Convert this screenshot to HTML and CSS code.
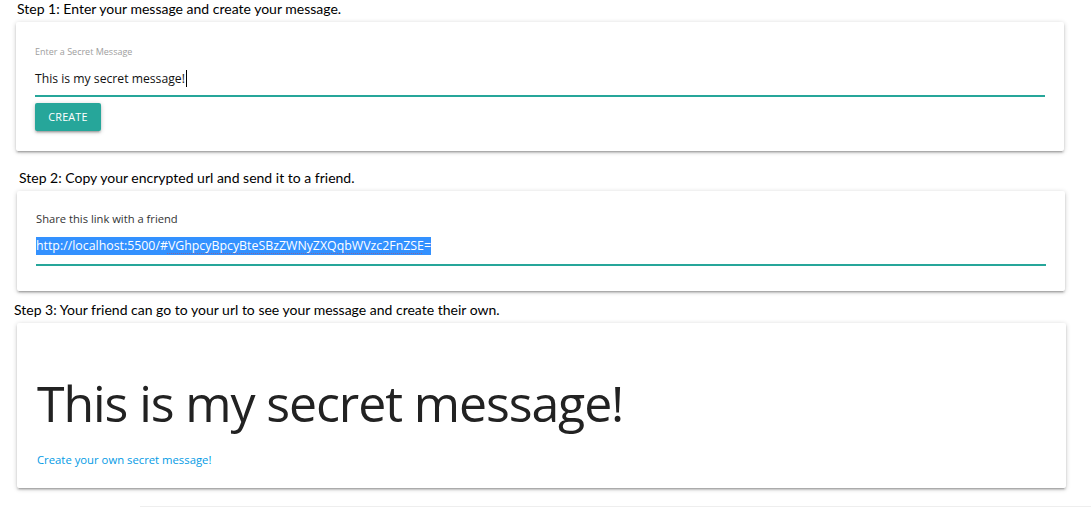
FILE: index.html
```html
<!DOCTYPE html>
<html>
<head>
<meta charset="utf-8">
<link rel="stylesheet" href="styles.css">
</head>
<body>
<section class="step step-one">
  <h2 class="step-title">Step 1: Enter your message and create your message.</h2>
  <div class="card card-one">
    <label class="field-label muted">Enter a Secret Message</label>
    <div class="field"><span class="field-text">This is my secret message!</span><span class="caret"></span></div>
    <button class="btn">CREATE</button>
  </div>
</section>
<section class="step step-two">
  <h2 class="step-title">Step 2: Copy your encrypted url and send it to a friend.</h2>
  <div class="card card-two">
    <label class="field-label dark">Share this link with a friend</label>
    <div class="field url-field"><span class="selected">http://localhost:5500/#<span class="misspelt">VGhpcyBpcyBteSBzZWNyZXQqbWVzc2FnZSE</span>=</span></div>
  </div>
</section>
<section class="step step-three">
  <h2 class="step-title">Step 3: Your friend can go to your url to see your message and create their own.</h2>
  <div class="card card-three">
    <h1 class="message">This is my secret message!</h1>
    <a class="own-link" href="#">Create your own secret message!</a>
  </div>
</section>
<div class="footer-rule"></div>
</body>
</html>
```
FILE: styles.css
```css
html, body {
  margin: 0;
  padding: 0;
  background: #fff;
}
body {
  width: 1091px;
  height: 512px;
  overflow: hidden;
  font-family: "Open Sans", "Noto Sans", sans-serif;
}
.step-title {
  margin: 0;
  font-family: Lato, "Liberation Sans", sans-serif;
  font-weight: 400;
  font-size: 14px;
  line-height: 18px;
  color: #000;
}
.step-one .step-title { padding-left: 17px; }
.step-two { margin-top: 18px; }
.step-two .step-title { padding-left: 19px; }
.step-three { margin-top: 10px; }
.step-three .step-title { padding-left: 14px; }

.card {
  background: #fff;
  border-radius: 2px;
  margin-top: 4px;
  box-shadow: 0 2px 2px 0 rgba(0,0,0,.14), 0 3px 1px -2px rgba(0,0,0,.12), 0 1px 5px 0 rgba(0,0,0,.2);
  box-sizing: border-box;
}
.card-one {
  margin-left: 16px;
  width: 1048px;
  padding: 24px 19px 20px;
}
.card-two {
  margin-left: 17px;
  width: 1048px;
  padding: 21px 19px 25px;
}
.card-three {
  margin-left: 17px;
  width: 1049px;
  height: 165px;
  padding: 45px 20px 0;
}
.field-label {
  display: block;
}
.muted {
  font-size: 9px;
  line-height: 12px;
  color: #9e9e9e;
}
.dark {
  font-size: 11.2px;
  line-height: 14px;
  color: #333;
}
.field {
  display: flex;
  align-items: center;
  border-bottom: 2px solid #26a69a;
  color: #111;
  font-size: 12.2px;
}
.card-one .field {
  margin-top: 10px;
  height: 20px;
  padding-bottom: 7px;
}
.caret {
  display: inline-block;
  width: 1px;
  height: 17px;
  background: #000;
  margin-left: 1px;
}
.url-field {
  margin-top: 11px;
  height: 18px;
  padding-bottom: 9px;
  font-size: 12.35px;
}
.selected {
  background: #3391ff;
  color: #fff;
  line-height: 18px;
  height: 18px;
}
.misspelt {
  text-decoration: underline dotted rgba(229, 57, 53, .45);
  text-decoration-thickness: 1px;
  text-underline-offset: 3px;
}
.btn {
  display: block;
  margin-top: 6px;
  width: 66px;
  height: 28px;
  border: 0;
  border-radius: 2px;
  background: #26a69a;
  color: #fff;
  font-family: "Open Sans", sans-serif;
  font-size: 10.8px;
  line-height: 28px;
  letter-spacing: .2px;
  padding: 0;
  box-shadow: 0 2px 2px 0 rgba(0,0,0,.14), 0 3px 1px -2px rgba(0,0,0,.12), 0 1px 5px 0 rgba(0,0,0,.2);
}
.message {
  margin: 0;
  font-family: "Open Sans", sans-serif;
  font-weight: 400;
  font-size: 50px;
  line-height: 70px;
  color: #222;
  letter-spacing: -1.1px;
}
.own-link {
  display: block;
  margin-top: 15px;
  font-size: 11.3px;
  line-height: 14px;
  color: #039be5;
  text-decoration: none;
}
.footer-rule {
  margin: 18px 0 0 140px;
  height: 1px;
  background: #eeeeee;
}
```
